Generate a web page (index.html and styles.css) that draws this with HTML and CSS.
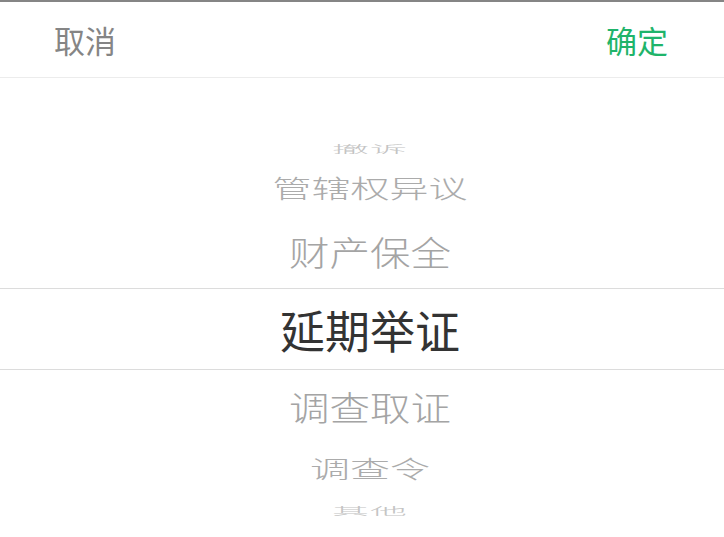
FILE: index.html
```html
<!DOCTYPE html>
<html lang="zh-CN">
<head>
<meta charset="utf-8">
<link rel="stylesheet" href="styles.css">
</head>
<body>
<div class="sheet">
  <div class="toolbar">
    <span class="btn cancel">取消</span>
    <span class="btn ok">确定</span>
  </div>
  <div class="picker">
    <div class="row far top"><span>撤诉</span></div>
    <div class="row near2"><span>管辖权异议</span></div>
    <div class="row near1 above"><span>财产保全</span></div>
    <div class="row selected"><span>延期举证</span></div>
    <div class="row near1 below"><span>调查取证</span></div>
    <div class="row near2 low"><span>调查令</span></div>
    <div class="row far bottom"><span>其他</span></div>
  </div>
</div>
</body>
</html>
```
FILE: styles.css
```css
html, body {
  margin: 0;
  padding: 0;
  background: #fff;
}
body {
  font-family: "Noto Sans CJK SC", "Noto Sans", sans-serif;
  width: 724px;
  height: 537px;
  overflow: hidden;
}
.sheet {
  border-top: 2px solid #858585;
}
.toolbar {
  height: 75px;
  border-bottom: 1px solid #ececec;
  display: flex;
  align-items: center;
  justify-content: space-between;
  padding: 0 56px 0 54px;
}
.btn {
  font-size: 31px;
  line-height: 1;
  font-weight: 400;
}
.cancel { color: #858585; }
.ok { color: #1fb46a; }

.picker {
  display: flex;
  flex-direction: column;
  padding-top: 50px;
}
.row {
  display: flex;
  align-items: center;
  justify-content: center;
  box-sizing: border-box;
  white-space: nowrap;
  padding-left: 16px;
}
.row span {
  display: inline-block;
  line-height: 1;
  font-weight: 300;
}
.far { height: 40px; }
.far span {
  font-size: 37px;
  color: #c4c4c4;
  transform: scaleY(0.28);
  letter-spacing: 1px;
}
.near2 { height: 38px; }
.near2 span {
  font-size: 39px;
  color: #ababab;
  transform: scaleY(0.64);
}
.near2.low { height: 48px; }
.near2.low span {
  font-size: 40px;
  transform: scaleY(0.6);
}
.near1.above {
  height: 82px;
  padding-top: 10px;
}
.near1.below {
  height: 74px;
}
.near1 span {
  font-size: 40.5px;
  color: #a4a4a4;
  transform: scaleY(0.85);
}
.selected {
  height: 82px;
  border-top: 1px solid #dcdcdc;
  border-bottom: 1px solid #dcdcdc;
}
.selected span {
  font-size: 45px;
  color: #333;
  font-weight: 400;
}
.far.bottom { height: 36px; }
```
